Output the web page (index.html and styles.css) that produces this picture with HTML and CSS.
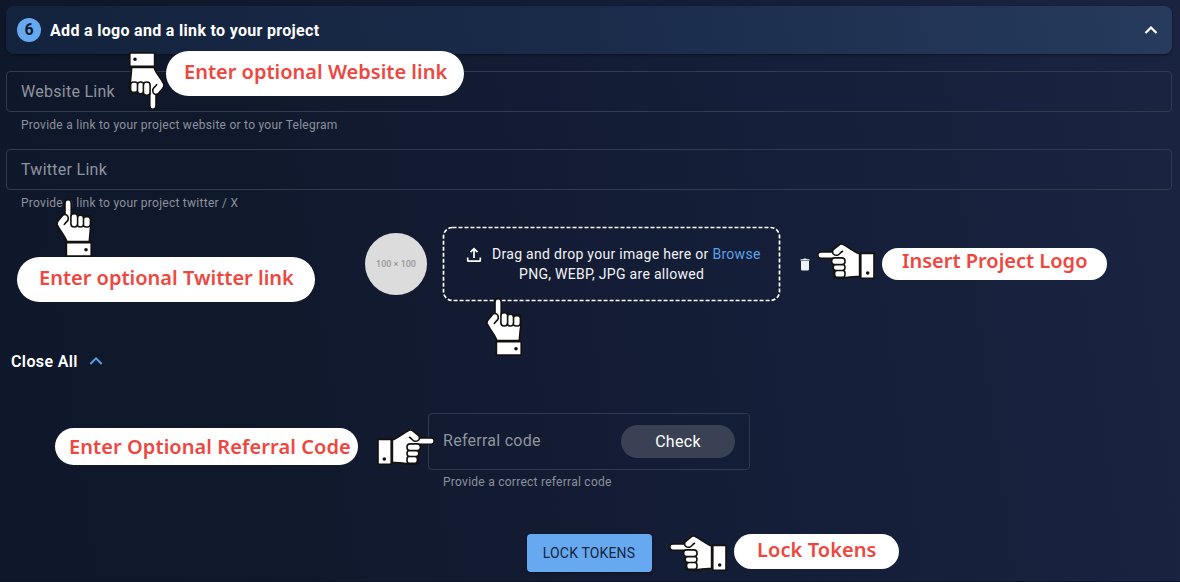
FILE: index.html
```html
<!DOCTYPE html>
<html lang="en">
<head>
<meta charset="utf-8">
<title>Lock Tokens</title>
<link rel="stylesheet" href="styles.css">
</head>
<body>
<svg class="defs" width="0" height="0" aria-hidden="true">
  <defs>
    <g id="hand" fill="#fff" stroke="#12110f" stroke-width="1.6" stroke-linejoin="round" stroke-linecap="round">
      <path d="M9 15.500V3.900a3.100 3.100 0 0 1 6.200 0V17h19.200c.7 5 .7 11-.3 16l-.8 9.600H10.900C9 36.500 4.500 32.500 1.200 25.800c-.7-1.800.3-3.300 1.400-4.500l3.600-4.400c.9-1 1.800-1.500 2.800-1.400z"/>
      <rect x="27.100" y="17.600" width="7.300" height="10.400" rx="3"/>
      <rect x="21.200" y="16.200" width="6.300" height="11.800" rx="3"/>
      <rect x="14.900" y="14.600" width="6.700" height="13.400" rx="3.200"/>
      <path fill="none" d="M9 15.500c2.400.2 3.700 2.500 3.200 5-.4 1.900-2.800 2.900-3.900 5"/>
      <path stroke-linejoin="miter" d="M10.400 43.800h24.800v13.200H10.400z"/>
      <circle cx="30" cy="50.700" r="1" fill="#12110f"/>
    </g>
  </defs>
</svg>
<main class="page">
  <header class="step">
    <span class="step-number">6</span>
    <h1 class="step-title">Add a logo and a link to your project</h1>
    <svg class="step-toggle" width="14" height="10" viewBox="0 0 14 10"><path d="M1.500 8L7 2.500 12.500 8"/></svg>
  </header>
  <div class="field"><span class="label website">Website Link</span></div>
  <p class="helper">Provide a link to your project website or to your Telegram</p>
  <div class="field field-second"><span class="label">Twitter Link</span></div>
  <p class="helper helper-second">Provide a link to your project twitter / X</p>
  <section class="upload">
    <div class="avatar">100 × 100</div>
    <div class="drop">
      <svg class="dashes" width="339" height="76"><rect x="1.500" y="1.500" width="336" height="73" rx="9"/></svg>
      <svg class="upload-icon" width="16" height="16" viewBox="0 0 16 16"><path d="M8 11V2M4.500 5.200L8 1.700l3.500 3.500M1.700 10.500v2.700q0 1 1 1h10.600q1 0 1-1v-2.700"/></svg>
      <p class="drop-text"><span class="drop-main">Drag and drop your image here or <a class="browse">Browse</a></span><span class="drop-types">PNG, WEBP, JPG are allowed</span></p>
    </div>
    <svg class="trash" width="10" height="13" viewBox="0 0 10 13"><path d="M0.500 1.300h2.700L3.800.6h2.400l.6.700h2.700v1.100h-9zM1 3h8v8.300a1.300 1.300 0 0 1-1.300 1.300H2.300A1.300 1.300 0 0 1 1 11.300z"/></svg>
  </section>
  <div class="close-all"><span>Close All</span><svg width="14" height="10" viewBox="0 0 14 10"><path d="M1.300 8l5.700-5.700L12.700 8"/></svg></div>
  <section class="referral">
    <div class="referral-box"><span class="label">Referral code</span><button class="check">Check</button></div>
    <p class="helper referral-help">Provide a correct referral code</p>
  </section>
  <button class="lock"><span>LOCK TOKENS</span></button>
</main>
<div class="notes">
  <div class="note note-website"><span>Enter optional Website link</span></div>
  <div class="note note-twitter"><span>Enter optional Twitter link</span></div>
  <div class="note note-logo"><span>Insert Project Logo</span></div>
  <div class="note note-code"><span>Enter Optional Referral Code</span></div>
  <div class="note note-lock"><span>Lock Tokens</span></div>
  <svg class="hand hand-website" width="37" height="59"><use href="#hand" transform="rotate(180 18 29)"/></svg>
  <svg class="hand hand-twitter" width="37" height="59"><use href="#hand"/></svg>
  <svg class="hand hand-drop" width="37" height="59"><use href="#hand"/></svg>
  <svg class="hand hand-logo" width="59" height="37"><use href="#hand" transform="matrix(0 1 1 0 0 0)"/></svg>
  <svg class="hand hand-code" width="59" height="37"><use href="#hand" transform="matrix(0 1 -1 0 58 0)"/></svg>
  <svg class="hand hand-lock" width="59" height="37"><use href="#hand" transform="matrix(0 1 1 0 0 0)"/></svg>
</div>
</body>
</html>
```

FILE: styles.css
```css
* { box-sizing: border-box; }
body {
  margin: 0;
  width: 1180px;
  height: 582px;
  overflow: hidden;
  position: relative;
  font-family: Roboto, sans-serif;
  background: linear-gradient(82deg, #0f182a 0%, #10192c 25%, #141d36 55%, #1a2340 100%);
}
p, h1 { margin: 0; }
.defs { position: absolute; }
.page { display: flex; flex-direction: column; padding: 6px 8px 0 6px; height: 582px; border-bottom: 1px solid #0d1425; }
.step {
  display: flex;
  align-items: center;
  height: 48px;
  padding: 0 14px 0 11px;
  border-radius: 8px;
  background: linear-gradient(80deg, #13233d, #1a2b4a 50%, #263b5d);
  box-shadow: 0 1px 3px rgba(0, 0, 0, .45);
}
.step-number {
  width: 24px; height: 24px; border-radius: 50%;
  background: #67a9f0; color: #101a2c;
  font-size: 16px; font-weight: 700; line-height: 24px; text-align: center;
}
.step-title { margin-left: 9px; color: #fff; font-size: 16px; font-weight: 700; letter-spacing: .31px; }
.step-toggle { margin-left: auto; fill: none; stroke: #fff; stroke-width: 2.2; }
.field {
  display: flex; align-items: center; height: 41px; margin-top: 17px; padding: 0 14px;
  border: 1px solid #323a4d; border-radius: 4px;
}
.label { color: #8f949e; font-size: 16px; letter-spacing: .27px; }
.helper { margin: 5px 0 0 15px; color: #8c919b; font-size: 12px; line-height: 16px; letter-spacing: .26px; }
.field-second { margin-top: 16px; }
.helper-second { margin-top: 5px; }
.upload { display: flex; align-items: center; height: 76px; margin: 15px 0 0 359px; }
.avatar {
  width: 62px; height: 62px; border-radius: 50%; background: #dcdcdc; color: #989898;
  font-size: 9px; font-weight: 500; text-align: center; line-height: 62px;
}
.drop { position: relative; display: flex; width: 339px; height: 76px; margin-left: 15px; padding: 18px 20px 0 24px; }
.dashes { position: absolute; inset: 0; fill: none; stroke: #fff; stroke-width: 1.700; stroke-dasharray: 4 2; }
.upload-icon { flex: none; margin-top: 3px; fill: none; stroke: #fff; stroke-width: 1.700; }
.drop-text { display: flex; flex-direction: column; margin-left: 10px; color: #f2f4f7; font-size: 14px; line-height: 20px; letter-spacing: .3px; white-space: nowrap; }
.drop-types { margin-left: 27px; }
.browse { color: #5ba2ea; }
.trash { margin-left: 19px; fill: #eef0f5; }
.close-all { display: flex; align-items: center; gap: 11px; height: 20px; margin: 49px 0 0 5px; color: #fff; font-size: 16px; font-weight: 600; letter-spacing: .38px; }
.close-all svg { fill: none; stroke: #5c9fe9; stroke-width: 2; }
.referral { width: 322px; margin: 42px 0 0 422px; }
.referral-box { display: flex; align-items: center; justify-content: space-between; height: 57px; padding: 0 14px; border: 1px solid #323a4d; border-radius: 4px; }
.check { width: 114px; height: 33px; border: 0; border-radius: 17px; background: #3a4154; color: #fff; font: 16px Roboto, sans-serif; letter-spacing: .3px; }
.referral .label { position: relative; top: -1px; }
.referral-help { margin-top: 4px; }
.lock { width: 125px; height: 38px; margin: 44px 0 0 520.500px; border: 0; border-radius: 4px; background: #67a9f0; color: #14253d; font: 14px Roboto, sans-serif; letter-spacing: .15px; padding: 0; box-shadow: 0 1px 3px rgba(0, 0, 0, .4); }
.note {
  position: absolute; display: flex; background: #fff; color: #ee473f;
  font: 600 20px/28px "Noto Sans", sans-serif; white-space: nowrap; border-radius: 23px;
}
.note-website { left: 166px; top: 51px; width: 298px; height: 45px; padding: 7px 0 0 18px; }
.note-twitter { left: 17px; top: 257px; width: 298px; height: 45px; padding: 7px 0 0 22px; }
.note-logo { left: 882px; top: 248px; width: 225px; height: 32px; padding: 0 0 0 20px; line-height: 26px; }
.note-code { left: 55px; top: 428px; width: 303px; height: 37px; padding: 5px 0 0 14px; letter-spacing: .07px; }
.note-lock { left: 734px; top: 534px; width: 165px; height: 35px; padding: 2px 0 0 23px; letter-spacing: .08px; }
.hand { position: absolute; overflow: visible; }
.hand-website { left: 129px; top: 52px; }
.hand-twitter { left: 56px; top: 199px; }
.hand-drop { left: 486px; top: 298px; }
.hand-logo { left: 817px; top: 243px; }
.hand-code { left: 377px; top: 429px; }
.hand-lock { left: 669px; top: 535px; }
```
